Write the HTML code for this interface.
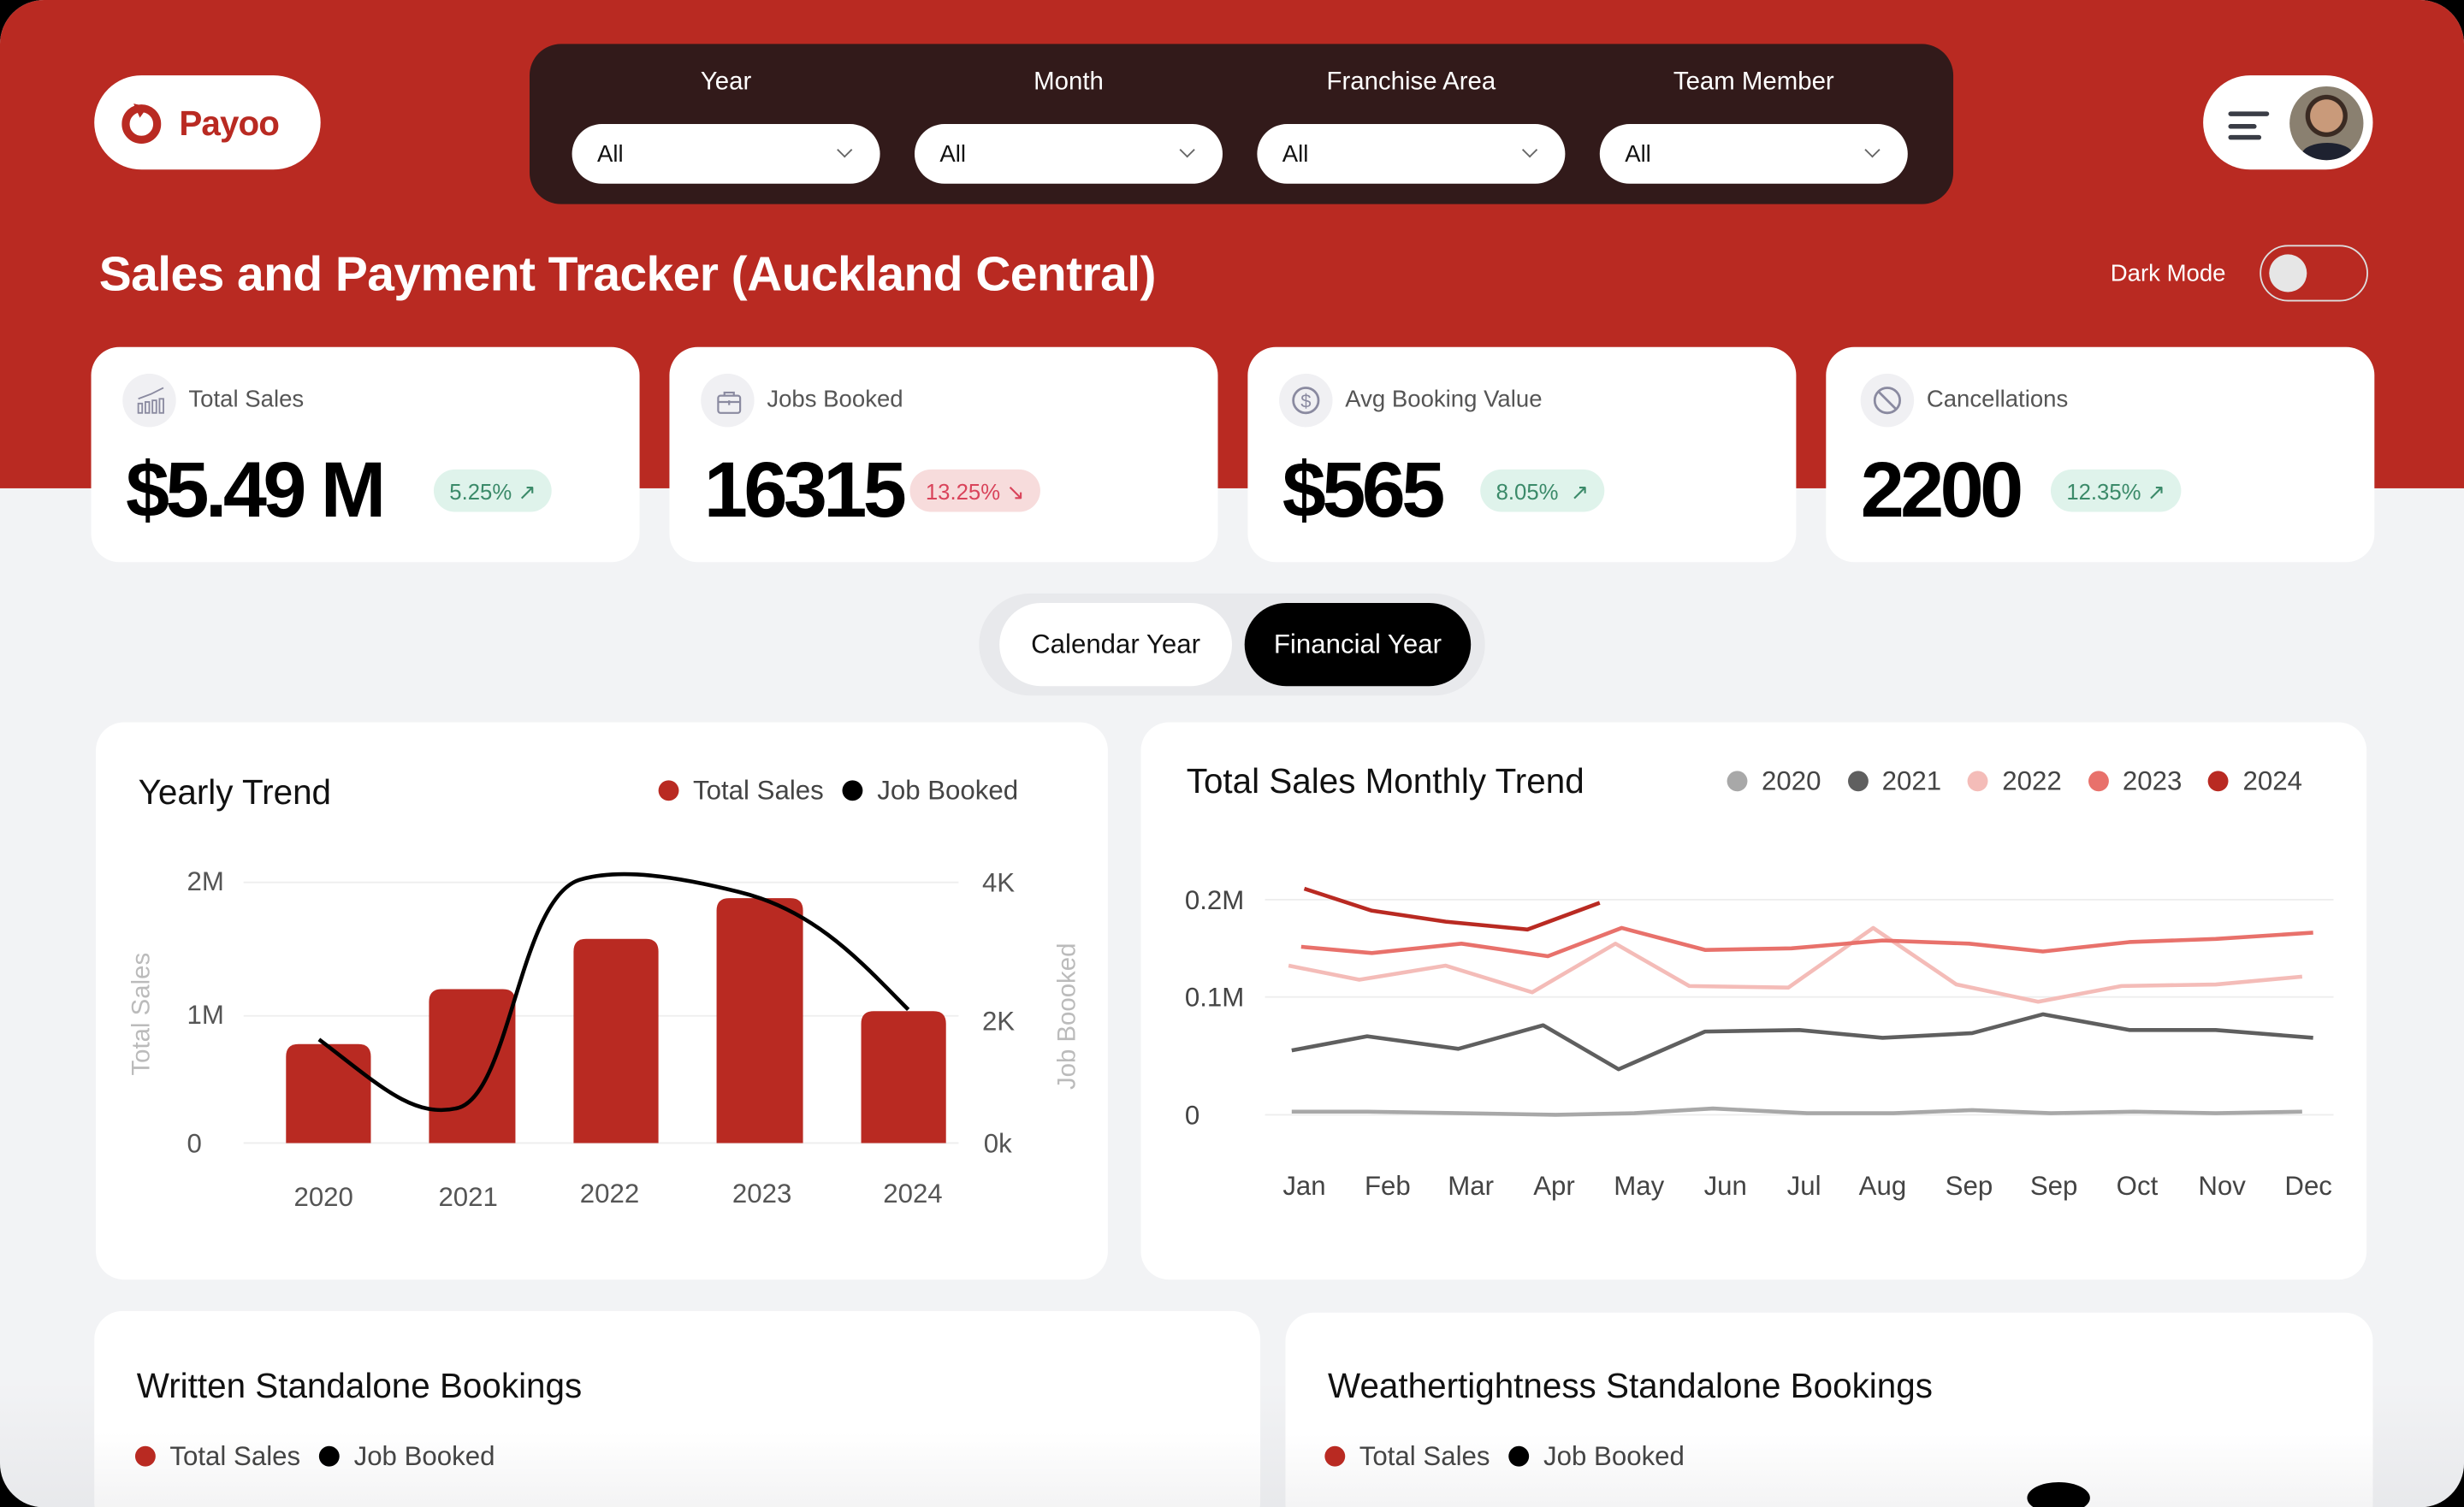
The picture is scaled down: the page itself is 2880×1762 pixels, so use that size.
<!DOCTYPE html>
<html><head><meta charset="utf-8"><style>
*{box-sizing:border-box;margin:0;padding:0}
html,body{width:2880px;height:1744px;overflow:hidden;background:#000}
#s{position:absolute;left:0;top:0;width:1568px;height:950px;transform:scale(1.83674,1.83579);transform-origin:0 0;font-family:"Liberation Sans",sans-serif;background:#000}
#scr{position:absolute;left:0;top:0;width:1568px;height:960px;border-radius:28px;overflow:hidden;background:#f2f3f5}
.red{position:absolute;left:0;top:0;width:1568px;height:311px;background:#b92a22}
.a{position:absolute}
.card{position:absolute;background:#fff;border-radius:18px}
.lbl{color:#fff;font-size:16px;text-align:center;width:196px}
.sel{background:#fff;border-radius:19px;width:196px;height:38px;font-size:15px;padding:11px 0 0 16px;color:#111}
.sel:after{content:"";position:absolute;right:19px;top:13px;width:6px;height:6px;border-right:1.5px solid #666;border-bottom:1.5px solid #666;transform:rotate(45deg)}
.ic{position:absolute;left:20px;top:17px;width:34px;height:34px;border-radius:50%;background:#f0f0f3}
.ct{position:absolute;left:62px;top:25px;font-size:15px;color:#555}
.big{position:absolute;left:22px;top:62px;font-size:50px;font-weight:bold;color:#000;letter-spacing:-2.5px}
.pill{position:absolute;top:78px;height:27px;border-radius:14px;font-size:14px;padding:6px 10px}
.g{background:#dff3eb;color:#3b8a69}.r{background:#f7dcdc;color:#d9435a}
.h{font-size:22px;color:#111}
.lg{font-size:17px;color:#444;white-space:nowrap}
.dot{display:inline-block;width:13px;height:13px;border-radius:50%;vertical-align:-1px;margin-right:9px}
.sp{display:inline-block;width:12px}
svg text{font-family:"Liberation Sans",sans-serif}
</style></head><body><div id="s"><div id="scr">
<div class="red"></div>
<div class="a" style="left:60px;top:48px;width:144px;height:60px;border-radius:30px;background:#fff"></div>
<svg class="a" style="left:76px;top:64px" width="28" height="28" viewBox="0 0 28 28"><circle cx="14" cy="15" r="10" fill="none" stroke="#b92a22" stroke-width="5"/><path d="M9 2 L18 4 L13 11 Z" fill="#b92a22"/></svg>
<div class="a" style="left:114px;top:66px;font-size:22px;font-weight:bold;color:#b92a22;letter-spacing:-0.5px">Payoo</div>
<div class="a" style="left:337px;top:28px;width:906px;height:102px;border-radius:20px;background:#321a1a"></div>
<div class="a lbl" style="left:364px;top:44px">Year</div>
<div class="a lbl" style="left:582px;top:44px">Month</div>
<div class="a lbl" style="left:800px;top:44px">Franchise Area</div>
<div class="a lbl" style="left:1018px;top:44px">Team Member</div>
<div class="a sel" style="left:364px;top:79px">All</div>
<div class="a sel" style="left:582px;top:79px">All</div>
<div class="a sel" style="left:800px;top:79px">All</div>
<div class="a sel" style="left:1018px;top:79px">All</div>
<div class="a" style="left:1402px;top:48px;width:108px;height:60px;border-radius:30px;background:#fff"></div>
<div class="a" style="left:1418px;top:71px;width:26px;height:3px;border-radius:2px;background:#3a3d46"></div>
<div class="a" style="left:1418px;top:79px;width:18px;height:3px;border-radius:2px;background:#3a3d46"></div>
<div class="a" style="left:1418px;top:86px;width:21px;height:3px;border-radius:2px;background:#3a3d46"></div>
<div class="a" style="left:1457px;top:55px;width:47px;height:47px;border-radius:50%;background:radial-gradient(circle at 50% 40%,#c99a7a 0 28%,#3a2a22 29% 36%,#8a8070 37%);overflow:hidden"><div class="a" style="left:8px;top:36px;width:32px;height:14px;border-radius:50% 50% 0 0;background:#1e2230"></div></div>
<div class="a" style="left:63px;top:157px;font-size:31px;font-weight:bold;color:#fff;letter-spacing:-0.3px">Sales and Payment Tracker (Auckland Central)</div>
<div class="a" style="left:1343px;top:166px;font-size:15px;color:#fff">Dark Mode</div>
<div class="a" style="left:1438px;top:156px;width:69px;height:36px;border-radius:18px;border:1.5px solid #ddd"></div>
<div class="a" style="left:1444px;top:162px;width:24px;height:24px;border-radius:50%;background:#e6e6e6"></div>
<div class="card" style="left:58px;top:221px;width:349px;height:137px"><div class="ic"></div><svg class="a" style="left:28px;top:25px" width="20" height="18" viewBox="0 0 20 18"><g fill="none" stroke="#8a8aa0" stroke-width="1"><rect x="2" y="11" width="2.5" height="6"/><rect x="6.5" y="10" width="2.5" height="7"/><rect x="11" y="9" width="2.5" height="8"/><rect x="15.5" y="8" width="2.5" height="9"/><path d="M2 8 L10 5 L18 1"/></g></svg><div class="ct">Total Sales</div><div class="big">$5.49 M</div><div class="pill g" style="left:218px">5.25% ↗</div></div>
<div class="card" style="left:426px;top:221px;width:349px;height:137px"><div class="ic"></div><svg class="a" style="left:30px;top:27px" width="16" height="16" viewBox="0 0 16 16"><g fill="none" stroke="#8a8aa0" stroke-width="1.2"><rect x="1" y="4" width="14" height="11" rx="1.5"/><path d="M5 4V2h6v2M1 8h14M8 7v3"/></g></svg><div class="ct">Jobs Booked</div><div class="big">16315</div><div class="pill r" style="left:153px">13.25% ↘</div></div>
<div class="card" style="left:794px;top:221px;width:349px;height:137px"><div class="ic"></div><svg class="a" style="left:27px;top:24px" width="20" height="20" viewBox="0 0 20 20"><circle cx="10" cy="10" r="8" fill="none" stroke="#8a8aa0" stroke-width="1.5"/><text x="10" y="14.5" font-size="12" text-anchor="middle" fill="#8a8aa0">$</text></svg><div class="ct">Avg Booking Value</div><div class="big">$565</div><div class="pill g" style="left:148px">8.05% &nbsp;↗</div></div>
<div class="card" style="left:1162px;top:221px;width:349px;height:137px"><div class="ic" style="left:22px"></div><svg class="a" style="left:29px;top:24px" width="20" height="20" viewBox="0 0 20 20"><g fill="none" stroke="#8a8aa0" stroke-width="1.5"><circle cx="10" cy="10" r="8"/><path d="M4.5 4.5 L15.5 15.5"/></g></svg><div class="ct" style="left:64px">Cancellations</div><div class="big">2200</div><div class="pill g" style="left:143px">12.35% ↗</div></div>
<div class="a" style="left:623px;top:378px;width:322px;height:65px;border-radius:33px;background:#e8e9ec"></div>
<div class="a" style="left:636px;top:384px;width:148px;height:53px;border-radius:27px;background:#fff;font-size:17px;color:#111;text-align:center;padding-top:17px">Calendar Year</div>
<div class="a" style="left:792px;top:384px;width:144px;height:53px;border-radius:27px;background:#000;font-size:17px;color:#fff;text-align:center;padding-top:17px">Financial Year</div>
<div class="card" style="left:61px;top:460px;width:644px;height:355px"></div>
<div class="a h" style="left:88px;top:492px">Yearly Trend</div>
<div class="a lg" style="left:419px;top:494px"><span class="dot" style="background:#b92a22"></span>Total Sales<span class="sp"></span><span class="dot" style="background:#000"></span>Job Booked</div>
<svg class="a" style="left:61px;top:460px" width="644" height="355" viewBox="61 460 644 355">
<g stroke="#eee" stroke-width="1"><line x1="155" y1="562" x2="610" y2="562"/><line x1="155" y1="647" x2="610" y2="647"/><line x1="155" y1="728" x2="610" y2="728"/></g>
<g font-size="17" fill="#555"><text x="119" y="567">2M</text><text x="119" y="652">1M</text><text x="119" y="734">0</text><text x="625" y="568">4K</text><text x="625" y="656">2K</text><text x="626" y="734">0k</text>
<text x="187" y="768">2020</text><text x="279" y="768">2021</text><text x="369" y="766">2022</text><text x="466" y="766">2023</text><text x="562" y="766">2024</text></g>
<text transform="translate(95,685) rotate(-90)" font-size="16" fill="#bbb">Total Sales</text>
<text transform="translate(684,694) rotate(-90)" font-size="16" fill="#bbb">Job Boooked</text>
<g fill="#b92a22"><path d="M182 728V673q0-8 8-8h38q8 0 8 8V728Z"/><path d="M273 728V638q0-8 8-8h39q8 0 8 8V728Z"/><path d="M365 728V606q0-8 8-8h38q8 0 8 8V728Z"/><path d="M456 728V580q0-8 8-8h39q8 0 8 8V728Z"/><path d="M548 728V652q0-8 8-8h38q8 0 8 8V728Z"/></g>
<path d="M203 662 C240 690,262 712,290 706 C325 700,330 570,370 560 C395 553,430 558,470 568 C520 580,550 615,578 643" fill="none" stroke="#000" stroke-width="2.5"/>
</svg>
<div class="card" style="left:726px;top:460px;width:780px;height:355px"></div>
<div class="a h" style="left:755px;top:485px">Total Sales Monthly Trend</div>
<div class="a lg" style="left:1099px;top:488px"><span class="dot" style="background:#a8a8a8"></span>2020<span class="sp"></span> <span class="dot" style="background:#5f5f5f"></span>2021<span class="sp"></span> <span class="dot" style="background:#f4bcb8"></span>2022<span class="sp"></span> <span class="dot" style="background:#e8716b"></span>2023<span class="sp"></span> <span class="dot" style="background:#b92a22"></span>2024</div>
<svg class="a" style="left:726px;top:460px" width="780" height="355" viewBox="726 460 780 355">
<g stroke="#eee"><line x1="805" y1="573" x2="1485" y2="573"/><line x1="805" y1="635" x2="1485" y2="635"/><line x1="805" y1="710" x2="1485" y2="710"/></g>
<g font-size="17" fill="#444"><text x="754" y="579">0.2M</text><text x="754" y="641">0.1M</text><text x="754" y="716">0</text></g>
<g font-size="17" fill="#444" text-anchor="middle"><text x="830" y="761">Jan</text><text x="883" y="761">Feb</text><text x="936" y="761">Mar</text><text x="989" y="761">Apr</text><text x="1043" y="761">May</text><text x="1098" y="761">Jun</text><text x="1148" y="761">Jul</text><text x="1198" y="761">Aug</text><text x="1253" y="761">Sep</text><text x="1307" y="761">Sep</text><text x="1360" y="761">Oct</text><text x="1414" y="761">Nov</text><text x="1469" y="761">Dec</text></g>
<g fill="none" stroke-width="2.5" stroke-linejoin="round">
<polyline stroke="#a8a8a8" points="822,708 870,708 930,709 990,710 1040,709 1090,706 1150,709 1205,709 1255,707 1305,709 1358,708 1410,709 1465,708"/>
<polyline stroke="#5f5f5f" points="822,669 870,660 928,668 982,653 1030,681 1085,657 1145,656 1198,661 1255,658 1300,646 1355,656 1410,656 1472,661"/>
<polyline stroke="#f4bcb8" points="820,615 865,624 920,615 975,632 1028,601 1075,628 1138,629 1192,591 1245,627 1297,638 1350,628 1410,627 1465,622"/>
<polyline stroke="#e8716b" points="828,603 873,607 930,601 985,609 1032,591 1085,605 1140,604 1198,599 1253,601 1300,606 1355,600 1410,598 1472,594"/>
<polyline stroke="#b92a22" points="830,566 873,580 920,587 972,592 1018,575"/>
</g></svg>
<div class="a" style="left:0;top:880px;width:1568px;height:80px;background:linear-gradient(rgba(225,226,229,0),rgba(225,226,229,.6))"></div>
<div class="card" style="left:60px;top:835px;width:742px;height:140px;background:linear-gradient(#fff 55%,#f0f0f1)"></div>
<div class="a h" style="left:87px;top:870px">Written Standalone Bookings</div>
<div class="a lg" style="left:86px;top:918px"><span class="dot" style="background:#b92a22"></span>Total Sales<span class="sp"></span><span class="dot" style="background:#000"></span>Job Booked</div>
<div class="card" style="left:818px;top:836px;width:692px;height:140px;background:linear-gradient(#fff 55%,#f0f0f1)"></div>
<div class="a h" style="left:845px;top:870px">Weathertightness Standalone Bookings</div>
<div class="a lg" style="left:843px;top:918px"><span class="dot" style="background:#b92a22"></span>Total Sales<span class="sp"></span><span class="dot" style="background:#000"></span>Job Booked</div>
<div class="a" style="left:1290px;top:944px;width:40px;height:20px;border-radius:50%;background:#000"></div>
</div></div></body></html>
